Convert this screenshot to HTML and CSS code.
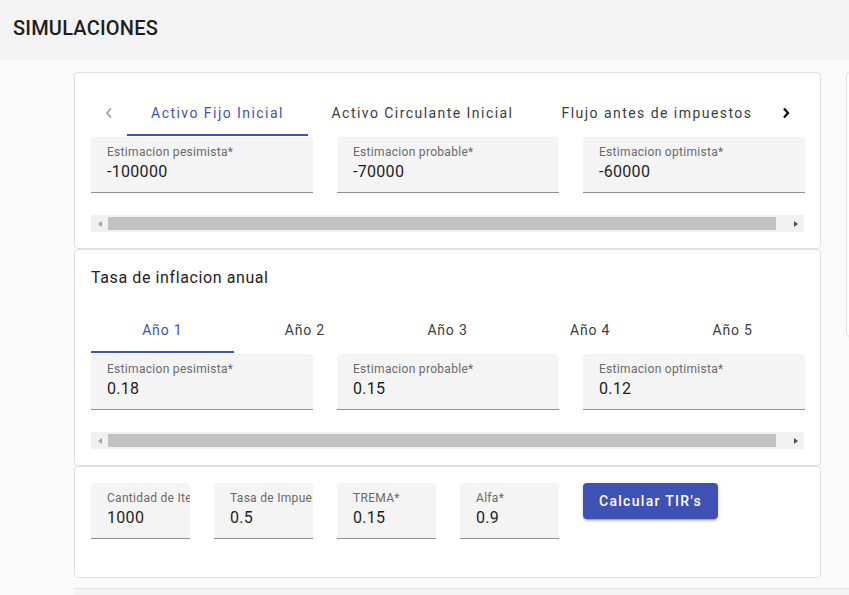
FILE: index.html
```html
<!DOCTYPE html>
<html lang="es">
<head>
<meta charset="utf-8">
<title>Simulaciones</title>
<link rel="stylesheet" href="styles.css">
</head>
<body>
<header class="topbar">SIMULACIONES</header>
<div class="main">
  <div class="column">
    <section class="card">
      <div class="tabs">
        <div class="pager pager-left">
          <svg width="8" height="12" viewBox="0 0 8 12"><polyline points="6,1.5 2,6 6,10.5" fill="none" stroke="#9e9e9e" stroke-width="1.8"/></svg>
        </div>
        <div class="tab-list">
          <div class="tab tab-wide tab-w1 active">Activo Fijo Inicial</div>
          <div class="tab tab-wide tab-w2">Activo Circulante Inicial</div>
          <div class="tab tab-wide tab-w3">Flujo antes de impuestos</div>
        </div>
        <div class="pager pager-right">
          <svg width="8" height="12" viewBox="0 0 8 12"><polyline points="2,1.5 6,6 2,10.5" fill="none" stroke="#111" stroke-width="2.4"/></svg>
        </div>
      </div>
      <div class="fields">
        <div class="field"><div class="field-label">Estimacion pesimista*</div><div class="field-value">-100000</div></div>
        <div class="field"><div class="field-label">Estimacion probable*</div><div class="field-value">-70000</div></div>
        <div class="field"><div class="field-label">Estimacion optimista*</div><div class="field-value">-60000</div></div>
      </div>
      <div class="hscroll">
        <span class="sb-btn"><span class="sb-arrow-left"></span></span>
        <span class="sb-track"><span class="sb-thumb"></span></span>
        <span class="sb-btn"><span class="sb-arrow-right"></span></span>
      </div>
    </section>

    <section class="card">
      <div class="card-title">Tasa de inflacion anual</div>
      <div class="tabs tabs-even">
        <div class="tab active">Año 1</div>
        <div class="tab">Año 2</div>
        <div class="tab">Año 3</div>
        <div class="tab">Año 4</div>
        <div class="tab">Año 5</div>
      </div>
      <div class="fields">
        <div class="field"><div class="field-label">Estimacion pesimista*</div><div class="field-value">0.18</div></div>
        <div class="field"><div class="field-label">Estimacion probable*</div><div class="field-value">0.15</div></div>
        <div class="field"><div class="field-label">Estimacion optimista*</div><div class="field-value">0.12</div></div>
      </div>
      <div class="hscroll">
        <span class="sb-btn"><span class="sb-arrow-left"></span></span>
        <span class="sb-track"><span class="sb-thumb"></span></span>
        <span class="sb-btn"><span class="sb-arrow-right"></span></span>
      </div>
    </section>

    <section class="card">
      <div class="fields fields-small">
        <div class="field"><div class="field-label">Cantidad de Iteraciones*</div><div class="field-value">1000</div></div>
        <div class="field"><div class="field-label">Tasa de Impuestos*</div><div class="field-value">0.5</div></div>
        <div class="field"><div class="field-label">TREMA*</div><div class="field-value">0.15</div></div>
        <div class="field"><div class="field-label">Alfa*</div><div class="field-value">0.9</div></div>
        <button class="btn-primary">Calcular TIR's</button>
      </div>
    </section>
  </div>
  <aside class="side-card"></aside>
</div>
<div class="strip"></div>
</body>
</html>
```

FILE: styles.css
```css
* { box-sizing: border-box; }

body {
  margin: 0;
  width: 849px;
  height: 595px;
  overflow: hidden;
  background: #fafafa;
  font-family: Roboto, "Noto Sans", "Liberation Sans", sans-serif;
  color: #212121;
}

.topbar {
  height: 60px;
  background: #f3f3f3;
  padding-left: 13px;
  font-size: 20px;
  font-weight: 500;
  line-height: 56px;
  letter-spacing: 0.2px;
  color: #1e1e1e;
}

.main {
  display: flex;
  align-items: flex-start;
  gap: 25px;
  width: 849px;
  overflow: hidden;
  padding: 12px 0 0 74px;
}

.column {
  width: 747px;
  flex: none;
  display: flex;
  flex-direction: column;
}

.card {
  background: #fff;
  border: 1px solid #e0e0e0;
  border-radius: 4px;
  padding: 16px;
}

.side-card {
  width: 200px;
  height: 265px;
  flex: none;
  background: #fff;
  border: 1px solid #e0e0e0;
  border-radius: 4px;
}

.strip {
  margin: 10px 0 0 74px;
  height: 7px;
  background: #f4f4f4;
  border-top: 1px solid #e2e2e2;
}

/* tabs */
.tabs {
  display: flex;
  height: 48px;
}

.tab-list {
  flex: 1;
  min-width: 0;
  display: flex;
  overflow: hidden;
}

.tab {
  position: relative;
  flex: none;
  display: flex;
  align-items: center;
  justify-content: center;
  white-space: nowrap;
  font-size: 14px;
  letter-spacing: 0.8px;
  color: #3c3c3c;
}

.tab-wide { letter-spacing: 1.45px; }

.tab.active { color: #3f51b5; }

.tab.active::after {
  content: "";
  position: absolute;
  left: 0;
  right: 0;
  bottom: 1px;
  height: 2px;
  background: #3f51b5;
}

.tab-w1 { width: 181px; }
.tab-w2 { width: 229px; }
.tab-w3 { width: 240px; }

.tabs-even .tab { flex: 1 1 0; }

.pager {
  flex: none;
  display: flex;
  align-items: center;
  justify-content: center;
}

.pager-left { width: 36px; }
.pager-right { width: 32px; justify-content: flex-start; padding-left: 10px; }

.card-title {
  font-size: 16px;
  line-height: 24px;
  letter-spacing: 0.6px;
  color: #1e1e1e;
  margin-bottom: 16px;
}

/* fields */
.fields {
  display: flex;
  align-items: flex-start;
  gap: 24px;
  padding-bottom: 22px;
}

.field {
  width: 222px;
  flex: none;
  overflow: hidden;
  background: #f4f4f4;
  border-radius: 4px 4px 0 0;
  border-bottom: 1px solid #8f8f8f;
  padding: 7px 16px 8px;
}

.fields-small .field { width: 99px; }

.field-label {
  font-size: 12px;
  line-height: 16px;
  letter-spacing: 0.3px;
  color: #6a6a6a;
  white-space: nowrap;
}

.field-value {
  font-size: 16px;
  line-height: 24px;
  letter-spacing: 0.3px;
  color: #1e1e1e;
}

/* fake scrollbar */
.hscroll {
  display: flex;
  height: 17px;
  background: #f1f1f1;
}

.sb-btn {
  width: 17px;
  flex: none;
  display: flex;
  align-items: center;
  justify-content: center;
}

.sb-arrow-left {
  width: 0;
  height: 0;
  border-top: 3.5px solid transparent;
  border-bottom: 3.5px solid transparent;
  border-right: 4px solid #a3a3a3;
}

.sb-arrow-right {
  width: 0;
  height: 0;
  border-top: 3.5px solid transparent;
  border-bottom: 3.5px solid transparent;
  border-left: 4px solid #505050;
}

.sb-track {
  flex: 1;
  display: flex;
  padding: 2px 11px 2px 0;
}

.sb-thumb {
  flex: 1;
  background: #c1c1c1;
}

/* button */
.btn-primary {
  width: 135px;
  height: 36px;
  flex: none;
  border: none;
  border-radius: 4px;
  background: #3f51b5;
  color: #fff;
  font-family: Roboto, "Noto Sans", sans-serif;
  font-size: 14px;
  font-weight: 500;
  letter-spacing: 1.3px;
  padding: 0;
  box-shadow: 0 3px 1px -2px rgba(0,0,0,.2), 0 2px 2px 0 rgba(0,0,0,.14), 0 1px 5px 0 rgba(0,0,0,.12);
}
```
